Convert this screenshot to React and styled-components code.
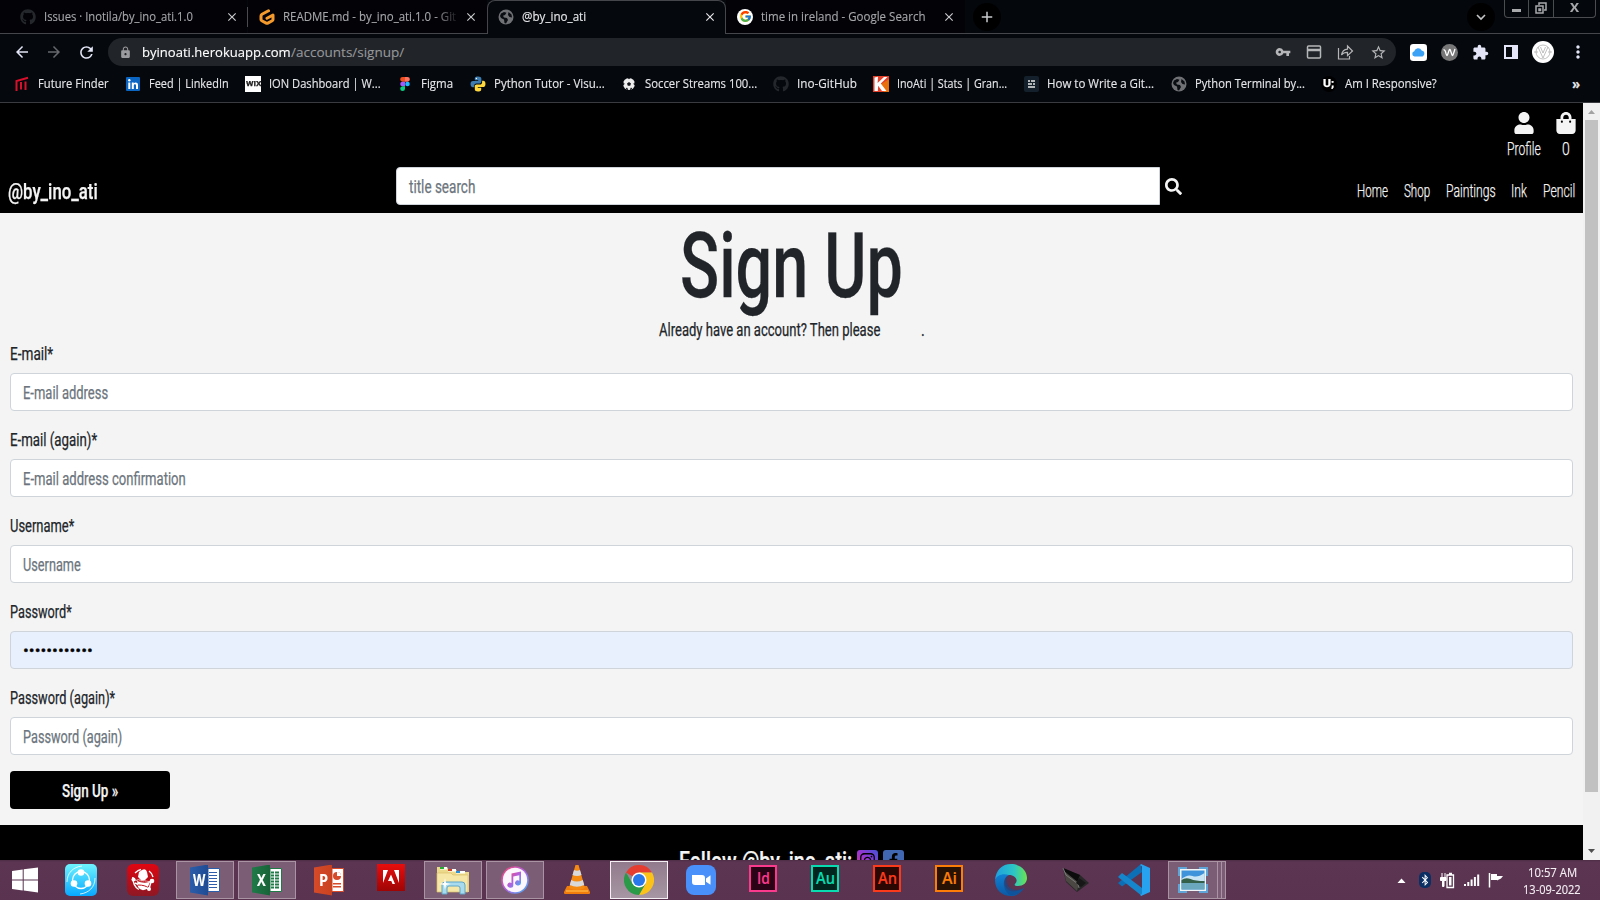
import React, { useLayoutEffect, useRef, useState } from 'react';
import styled, { createGlobalStyle, css } from 'styled-components';
import { FaGithub, FaUser, FaShoppingBag, FaSearch, FaInstagram, FaFacebookF, FaBluetoothB } from 'react-icons/fa';
import { MdLock, MdVpnKey, MdExtension, MdStarBorder, MdArrowBack, MdArrowForward, MdRefresh, MdPublic, MdMoreVert, MdClose, MdAdd } from 'react-icons/md';
import { FcGoogle } from 'react-icons/fc';

const Global = createGlobalStyle`
  * { box-sizing: border-box; }
  html, body { margin: 0; width: 1600px; height: 900px; overflow: hidden; background: #000; }
  svg { display: block; flex: none; }
`;

/* Text set to an exact measure: the glyphs are condensed or widened to fill it. */
const Measure = styled.span`
  display: block;
  flex: none;
  white-space: nowrap;
  width: ${p => p.$w}px;
  height: ${p => p.$lh}px;
  line-height: ${p => p.$lh}px;
  font-family: ${p => (p.$ui ? "'Open Sans', 'Noto Sans', sans-serif" : "Roboto, 'Liberation Sans', sans-serif")};
  font-size: ${p => p.$size}px;
  font-weight: ${p => p.$weight || 400};
  color: ${p => p.$color || 'inherit'};
  -webkit-text-stroke: ${p => (p.$ui ? 0.12 : 0.25)}px currentColor;
`;
const Stretch = styled.span`
  display: inline-block;
  transform-origin: 0 50%;
`;
function Fit({ w, size = 18, lh = 24, weight, color, ui, dy = ui ? 0 : 1, children }) {
  const ref = useRef(null);
  const [scale, setScale] = useState(1);
  useLayoutEffect(() => {
    setScale(w / ref.current.offsetWidth);
  }, [w, children]);
  return (
    <Measure $w={w} $size={size} $lh={lh} $weight={weight} $color={color} $ui={ui}>
      <Stretch ref={ref} style={{ transform: `translateY(${dy}px) scaleX(${scale})` }}>{children}</Stretch>
    </Measure>
  );
}

const Screen = styled.div`
  width: 1600px;
  height: 900px;
  display: flex;
  flex-direction: column;
  overflow: hidden;
  background: #000;
`;

/* ---------- browser chrome ---------- */
const TabStrip = styled.div`
  height: 34px;
  flex: none;
  display: flex;
  background: #04070c;
  box-shadow: inset 0 -1px #44464b;
`;
const Tab = styled.div`
  width: ${p => p.$w}px;
  height: ${p => (p.$active ? 34 : 33)}px;
  flex: none;
  display: flex;
  align-items: center;
  padding: 0 ${p => p.$right}px 0 ${p => p.$left}px;
  gap: 8px;
  color: #a6a7aa;
  background: #020207;
  ${p => p.$active && css`
    color: #e6e7ea;
    background: #05080d;
    border: 1px solid #44464b;
    border-bottom: 0;
    border-radius: 8px 8px 0 0;
    padding-bottom: 2px;
  `}
`;
const TabTitle = styled.div`
  flex: 1;
  min-width: 0;
  overflow: hidden;
  ${p => p.$fade && css`mask-image: linear-gradient(90deg, #000 88%, rgba(0, 0, 0, .15));`}
`;
const TabDivider = styled.div`
  width: 1px;
  height: 20px;
  margin-top: 7px;
  background: #4a4b4f;
`;
const RoundLogo = styled.div`
  width: 16px;
  height: 16px;
  border-radius: 50%;
  background: #fff;
  display: flex;
  align-items: center;
  justify-content: center;
`;
const RoundButton = styled.div`
  width: 28px;
  height: 28px;
  margin: 3px 0 0 ${p => p.$ml}px;
  border-radius: 50%;
  background: #000;
  color: #c9cacc;
  display: flex;
  align-items: center;
  justify-content: center;
`;
const WindowButtons = styled.div`
  display: grid;
  grid-template-columns: 24px 25px 1fr;
  width: 92px;
  height: 18px;
  margin-left: 9px;
  border: 1px solid #4b4c50;
  border-top: 0;
  border-radius: 0 0 4px 4px;
`;
const WindowButton = styled.div`
  display: flex;
  align-items: center;
  justify-content: center;
  padding-bottom: 1px;
  border-right: ${p => (p.$last ? 0 : 1)}px solid #4b4c50;
`;
const Toolbar = styled.div`
  height: 34px;
  flex: none;
  display: flex;
  align-items: center;
  padding: 2px 0 0 13px;
  background: #05080d;
  color: #e4e5f6;
`;
const NavIcons = styled.div`
  display: flex;
  gap: 14px;
  width: 95px;
  stroke-width: .5px;
`;
const AddressBar = styled.div`
  width: 1288px;
  height: 28px;
  border-radius: 14px;
  background: #212428;
  display: flex;
  align-items: center;
  padding: 0 9px 0 11px;
`;
const AddressText = styled.div`
  display: flex;
  margin-left: 10px;
`;
const AddressIcons = styled.div`
  display: flex;
  align-items: center;
  gap: 15px;
  margin-left: auto;
  color: #b5b6b8;
`;
const Extensions = styled.div`
  display: flex;
  align-items: center;
  justify-content: space-between;
  width: 178px;
  margin-left: 14px;
`;
const Bookmarks = styled.div`
  height: 35px;
  flex: none;
  display: flex;
  align-items: center;
  padding: 0 17px 2px 14px;
  gap: 16.2px;
  background: #05080d;
  border-bottom: 1px solid #393b40;
  color: #e6e7ea;
`;
const Bookmark = styled.div`
  display: flex;
  align-items: center;
  gap: 8px;
`;
const More = styled.div`
  margin-left: auto;
  padding-right: 3px;
`;
const Avatar = styled.div`
  width: 22px;
  height: 22px;
  border-radius: 50%;
  background: #fff;
`;

/* ---------- web page ---------- */
const Viewport = styled.div`
  height: 757px;
  flex: none;
  display: flex;
  overflow: hidden;
`;
const Page = styled.div`
  width: 1583px;
  height: 757px;
  overflow: hidden;
  background: #f4f4f4;
  color: #212529;
`;
const Header = styled.header`
  height: 110px;
  background: #000;
  color: #f4f4f4;
  padding: 9px 8px 0;
`;
const Account = styled.div`
  height: 55px;
  display: flex;
  justify-content: flex-end;
  gap: 15px;
  margin-right: -1px;
`;
const AccountLink = styled.div`
  display: flex;
  flex-direction: column;
  align-items: center;
  gap: 2px;
`;
const BagGlyph = styled.div`
  width: 20px;
  display: flex;
  justify-content: center;
`;
const NavRow = styled.div`
  display: flex;
  height: 46px;
`;
const Brand = styled.div`
  width: 388px;
  padding-top: 11px;
`;
const SearchBox = styled.div`
  width: 764px;
  height: 38px;
  padding: 6px 12px;
  background: #fff;
  border: 1px solid #ced4da;
  border-radius: 4px 0 0 4px;
`;
const SearchIcon = styled.div`padding: 11px 0 0 5px;`;
const Menu = styled.nav`
  display: flex;
  gap: 15.8px;
  padding-top: 11px;
  margin-left: auto;
`;
const Heading = styled.div`
  height: 104px;
  padding-top: 4px;
  display: flex;
  justify-content: center;
`;
const Lead = styled.div`
  height: 24px;
  display: flex;
  gap: 41px;
  padding-left: 659px;
`;
const Form = styled.div`padding: 0 10px;`;
const Field = styled.div`
  height: 38px;
  margin: 8px 0 16px;
  padding: 6px 12px;
  border: 1px solid #ced4da;
  border-radius: 4px;
  color: #6c757d;
  background: ${p => (p.$filled ? '#e8f0fe' : '#fff')};
`;
const Submit = styled.div`
  width: 160px;
  height: 38px;
  display: flex;
  align-items: center;
  justify-content: center;
  background: #000;
  color: #f4f4f4;
  border-radius: 4px;
`;
const Footer = styled.footer`
  height: 80px;
  margin-top: 16px;
  background: #000;
  color: #f4f4f4;
  display: flex;
  gap: 5px;
  padding: 25px 0 0 679px;
`;
const Social = styled.div`
  width: 21px;
  height: 21px;
  border-radius: 3px;
  display: flex;
  align-items: center;
  justify-content: center;
  color: #000;
  background: ${p => p.$bg};
`;
const Scrollbar = styled.div`
  width: 17px;
  background: #f1f1f1;
  display: flex;
  flex-direction: column;
  align-items: center;
`;
const Thumb = styled.div`
  width: 13px;
  height: 672px;
  margin-bottom: 51px;
  flex: none;
  background: #c1c1c1;
`;

/* ---------- taskbar ---------- */
const Taskbar = styled.div`
  height: 40px;
  flex: none;
  display: flex;
  background: linear-gradient(#4e2d46, #5b3552 2px, #593350);
`;
const Task = styled.div`
  width: ${p => p.$w || 58}px;
  height: 38px;
  flex: none;
  margin: 1px 4px 0 0;
  display: flex;
  align-items: center;
  justify-content: center;
  ${p => p.$open && css`
    background: #7c5d76;
    border: 1px solid #a994a4;
  `}
  ${p => p.$current && css`
    background: linear-gradient(#917a8c, #a796a3);
    border: 1px solid #f3eff2;
  `}
`;
const StartTask = styled(Task)`padding-left: 2px;`;
const Stack = styled.div`
  width: 4px;
  height: 38px;
  margin: 1px 0 0;
  background: #7c5d76;
  border-right: 1px solid #a994a4;
  border-top: 1px solid #a994a4;
  border-bottom: 1px solid #a994a4;
`;
const TaskGroup = styled.div`
  display: flex;
  margin-left: 7px;
  ${Task} { margin-right: 0; }
`;
const Adobe = styled.div`
  width: 28px;
  height: 27px;
  margin-bottom: 3px;
  border: 2px solid ${p => p.$c};
  background: ${p => p.$bg};
  color: ${p => p.$c};
  display: flex;
  align-items: center;
  justify-content: center;
`;
const Tray = styled.div`
  margin-left: auto;
  display: flex;
  align-items: center;
  padding-right: 19px;
`;
const TrayIcons = styled.div`
  display: flex;
  align-items: center;
  gap: 8.5px;
  margin-right: 19px;
`;
const Clock = styled.div`
  display: flex;
  flex-direction: column;
  align-items: center;
  padding-top: 2px;
  color: #f5f0f4;
`;

/* ---------- icons ---------- */
const Gitpod = () => (
  <svg width="16" height="16" viewBox="0 0 16 16" fill="none" stroke="#f49a2c" strokeWidth="3" strokeLinecap="round" strokeLinejoin="round">
    <path d="M9.5 1.8 3 5.3Q2 5.9 2 7v3.4q0 .9.8 1.3l4.4 2.4q.8.4 1.6 0l4.4-2.4q.8-.4.8-1.3V6L8 9.2" />
  </svg>
);
const Globe = () => (
  <svg width="16" height="16" viewBox="0 0 16 16"><circle cx="8" cy="8" r="7.500" fill="#6f7175" /><path d="M3 4.500 6 3l2.500.8L7 6l-2 .8 1 1.700 3 .5 1 2-2 3.500-1.500-.5L6 10.500 3 9l-1-2zM10.500 3l3 2.500.5 3-2.500-.5-1.500-2z" fill="#0a0d12" /></svg>
);
const Chevron = () => (
  <svg width="12" height="12" viewBox="0 0 12 12" fill="none" stroke="#c4c5c7" strokeWidth="1.6"><path d="m2 4 4 4 4-4" /></svg>
);
const Card = () => (
  <svg width="16" height="14" viewBox="0 0 16 14" fill="none" stroke="#b5b6b8" strokeWidth="1.5"><rect x="1.5" y="1" width="13" height="12" rx="1" /><path d="M1 5h14" strokeWidth="2.500" /></svg>
);
const Share = () => (
  <svg width="18" height="16" viewBox="0 0 18 16" fill="none" stroke="#b5b6b8" strokeWidth="1.2"><path d="M1.500 4v11h11v-3M4.500 11c.7-4 3-5.600 6-5.800V2l5 5-5 4.600V8.400C8 8.300 6 9 4.500 11z" /></svg>
);
const ICloud = () => (
  <svg width="17" height="17" viewBox="0 0 16 16"><rect width="16" height="16" rx="3" fill="#fff" /><path d="M4.300 11.700a2.500 2.500 0 0 1-.3-4.900A3.800 3.800 0 0 1 11 6a3 3 0 0 1 .8 5.700z" fill="#3ca2f6" /></svg>
);
const WExt = () => (
  <svg width="17" height="17" viewBox="0 0 17 17"><circle cx="8.500" cy="8.500" r="8.500" fill="#777" /><path d="M2.500 6q1.500-1 2.500 3.500 1 4 2 0l1-3q.8-2 1.500 0l1 3q1 4 2 0L14 5" fill="none" stroke="#fff" strokeWidth="1.300" strokeLinejoin="round" /></svg>
);
const SidePanel = () => (
  <svg width="14" height="14" viewBox="0 0 14 14"><path d="M0 0h14v14H0zM2 2v10h6V2z" fill="#e4e5f6" fillRule="evenodd" /></svg>
);
const AvatarArt = () => (
  <svg width="22" height="22" viewBox="0 0 22 22" fill="none" stroke="#a5a5a5" strokeWidth=".7"><circle cx="11" cy="11" r="7" /><path d="M2 11h4m10 0h4M6 6l5 11 5-11M8.500 6 11 12l2.500-6" /></svg>
);
const FutureFinder = () => (
  <svg width="16" height="16" viewBox="0 0 16 16" fill="none" stroke="#d8102c" strokeWidth="2"><path d="M2.500 15V5L14 1.800M7 13.500V6M11.500 14V5.500" /></svg>
);
const LinkedIn = () => (
  <svg width="16" height="16" viewBox="0 0 16 16"><rect x="1" y="1" width="14" height="14" rx="1" fill="#0a66c2" /><g fill="#fff"><circle cx="4.300" cy="4.300" r="1.200" /><path d="M3.300 6.500h2V13h-2zM6.800 6.500h1.900v.9c1-1.500 4.300-1.500 4.300 1.500V13h-2V9.500c0-1.800-2.200-1.700-2.200 0V13h-2z" /></g></svg>
);
const WixBox = styled.div`
  width: 16px;
  height: 16px;
  background: #fff;
  color: #222;
  display: flex;
  align-items: center;
  justify-content: center;
`;
const Figma = () => (
  <svg width="16" height="16" viewBox="0 0 16 16"><path d="M5.500 1H8v4.700H5.500a2.350 2.350 0 0 1 0-4.700z" fill="#f24e1e" /><path d="M8 1h2.500a2.350 2.350 0 0 1 0 4.700H8z" fill="#ff7262" /><path d="M5.500 5.700H8v4.600H5.500a2.300 2.300 0 0 1 0-4.600z" fill="#a259ff" /><circle cx="10.500" cy="8" r="2.300" fill="#1abcfe" /><path d="M5.500 10.300H8v2.400a2.400 2.400 0 1 1-2.500-2.400z" fill="#0acf83" /></svg>
);
const PythonLogo = () => (
  <svg width="16" height="16" viewBox="0 0 16 16"><path d="M8 .5C4.800.5 4.800 1.800 4.800 3v1.300h3.400v.6H3C1.400 4.900.5 6 .5 8s.9 3.200 2.300 3.200h1.500V9.500c0-1.200.9-2.100 2.100-2.100h3.200c1 0 1.800-.8 1.800-1.800V2.700C11.400 1.200 10 .5 8 .5z" fill="#3d7cb0" /><path d="M8 15.500c3.200 0 3.200-1.300 3.200-2.500v-1.300H7.800v-.6H13c1.600 0 2.500-1.100 2.500-3.100S14.600 4.800 13.200 4.800h-1.100v1.700c0 1.200-1 2.100-2.100 2.100H6.600c-1 0-1.800.8-1.800 1.800v2.900c0 1.500 1.200 2.200 3.200 2.200z" fill="#ffd83c" /><circle cx="6.400" cy="2.500" r=".7" fill="#fff" /></svg>
);
const Soccer = () => (
  <svg width="16" height="16" viewBox="0 0 16 16"><circle cx="8" cy="8" r="6" fill="#eee" /><g fill="#15171b"><path d="m8 6 2 1.500-.8 2.300H6.800L6 7.500zM6.500 2h3L8 3.300zM2.200 6l1.300 1.500L3 9l-1 .5zM13.800 6l-1.300 1.500.5 1.500 1 .5zM4.500 12l1.700-.3.8 1.500-.5 1zM11.500 12l-1.700-.3-.8 1.500.5 1z" /></g></svg>
);
const Kaggle = () => (
  <svg width="16" height="16" viewBox="0 0 16 16"><rect width="16" height="16" fill="#e2412b" /><path d="M7 9 16 3v13h-5z" fill="#e9700f" /><path d="M1.500 1.500 5 .8 4.600 7 11 1h3.500L7.800 7.500 13.500 15H9L5.200 9.800 4.800 15H1.500z" fill="#fff" /></svg>
);
const Doc = () => (
  <svg width="16" height="16" viewBox="0 0 16 16"><rect x="1" width="15" height="16" rx="2" fill="#14212c" /><path d="M5 5h2m1 0h4M5 8h4m1 0h2M5 11h7" stroke="#e8e8e8" strokeWidth="1.300" /></svg>
);
const UBox = styled.div`
  width: 16px;
  height: 16px;
  border-radius: 50%;
  background: #000;
  color: #fff;
  display: flex;
  align-items: center;
  justify-content: center;
`;
const Arrow = ({ up }) => (
  <svg width="17" height="17" viewBox="0 0 17 17"><path d={up ? 'M5 11h7L8.500 7z' : 'M5 6h7l-3.500 4z'} fill={up ? '#a3a3a3' : '#505050'} /></svg>
);
const Windows = () => (
  <svg width="26" height="26" viewBox="0 0 26 26" fill="#fff"><path d="M0 4 10.700 2.400v10H0zM11.700 2.200 26 .4v12H11.700zM0 13.500h10.700v10L0 22zM11.700 13.500H26v12l-14.300-1.900z" /></svg>
);
const ShareIt = () => (
  <svg width="32" height="32" viewBox="0 0 32 32">
    <defs><linearGradient id="si" x2="0" y2="1"><stop stopColor="#6ff3ff" /><stop offset="1" stopColor="#08a8ff" /></linearGradient></defs>
    <rect width="32" height="32" rx="5" fill="url(#si)" />
    <g fill="none" stroke="#fff" strokeWidth="1.300"><circle cx="16" cy="16" r="8.500" /><path d="M2 18C2 9 8 3 17 2M30 14c0 9-6 15-15 16" strokeWidth=".8" /></g>
    <g fill="#fff"><circle cx="16" cy="8.500" r="3.300" /><circle cx="9" cy="19.500" r="3.300" /><circle cx="23" cy="19.500" r="3.300" /></g>
  </svg>
);
const RedGlobe = () => (
  <svg width="32" height="32" viewBox="0 0 32 32">
    <defs><linearGradient id="rg" x2="0" y2="1"><stop stopColor="#e10510" /><stop offset="1" stopColor="#8d1824" /></linearGradient></defs>
    <rect width="32" height="32" rx="6" fill="url(#rg)" />
    <path d="M15 6q4-2 5 2l1 5-3 3h-4l-3-3 1-5zM10 17q6 3 13 1l-3 7q-6 3-9-2z" fill="#fff" />
    <g fill="none" stroke="#fff" strokeWidth="1.400"><path d="M8 9q3-3 6-3.500M5.800 13q0 9 6 12.500M22 7q3 2 4 6M6.500 15.500 24 18l-2 7M8 19l14 6" /><path d="M8 15c6 3 11 3 16 1M11 21c5 0 8 1 11 3" stroke="#c5121c" strokeWidth="1" /></g>
    <g fill="#fff"><circle cx="6.500" cy="15.500" r="2" /><circle cx="25" cy="17" r="2.300" /><circle cx="22" cy="25" r="2" /></g>
  </svg>
);
const OfficeTile = styled.div`
  display: grid;
  grid-template-columns: 18px 12px;
  align-items: center;
  width: 30px;
  height: 31px;
`;
const OfficeCover = styled.div`
  height: 31px;
  display: flex;
  align-items: center;
  justify-content: center;
  color: #fff;
  background: linear-gradient(90deg, ${p => p.$c}, ${p => p.$d});
  clip-path: polygon(0 10%, 100% 0, 100% 100%, 0 90%);
`;
const OfficeSheet = ({ c, kind }) => (
  <svg width="12" height="24" viewBox="0 0 12 24">
    <path d="M0 .5h11.500v23H0z" fill="#fff" stroke={c} />
    {kind === 'P' ? (
      <g fill={c}><circle cx="5" cy="8" r="4" /><path d="M1 15h8v1.500H1zM1 18h8v1.500H1z" /><path d="M5 8V4a4 4 0 0 1 4 4z" fill="#fff" /></g>
    ) : (
      <path d={kind === 'W' ? 'M1 4.500h8M1 7.500h8M1 10.500h8M1 13.500h8M1 16.500h8M1 19.500h8' : 'M1 4.500h3m1 0h4M1 7.500h3m1 0h4M1 10.500h3m1 0h4M1 13.500h3m1 0h4M1 16.500h3m1 0h4M1 19.500h3m1 0h4'} stroke={c} strokeWidth={kind === 'W' ? 1.2 : 1.8} />
    )}
  </svg>
);
const Office = ({ letter, c, d }) => (
  <OfficeTile>
    <OfficeCover $c={c} $d={d}><Fit ui w={letter === 'W' ? 12 : 9} size={16} lh={20} weight={700}>{letter}</Fit></OfficeCover>
    <OfficeSheet c={c} kind={letter} />
  </OfficeTile>
);
const AdobeReader = () => (
  <svg width="28" height="32" viewBox="0 0 28 32">
    <defs><linearGradient id="ar" x2="0" y2="1"><stop stopColor="#e80d0d" /><stop offset="1" stopColor="#9e0505" /></linearGradient></defs>
    <rect width="28" height="27" fill="url(#ar)" />
    <path d="M6 6h5L6 19zM17 6h5v13zM14 10.500 18 20h-2.500l-1.200-3H11z" fill="#fff" />
  </svg>
);
const Folder = () => (
  <svg width="34" height="32" viewBox="0 0 34 32">
    <path d="M1 7V3h10l2 3h7l2 2h11v20H1z" fill="#ecd98a" /><path d="M1 9h14l2 2h15v17H1z" fill="#f7e7a6" stroke="#d9c06a" strokeWidth=".7" />
    <rect x="4" y="3" width="7" height="2.500" fill="#fff" /><rect x="4" y="3" width="4" height="2" fill="#27ad33" /><rect x="12" y="5" width="8" height="2.500" fill="#fff" /><rect x="12" y="5" width="4" height="2" fill="#cb4025" /><rect x="20" y="7" width="9" height="2.500" fill="#fff" /><rect x="20" y="7" width="4" height="2" fill="#2b8fd8" />
    <path d="M6 30V21q0-3 3-3h17q3 0 3 3v9h-5v-6q0-2-2-2h-9q-2 0-2 2v6z" fill="#a9dbee" stroke="#5fa6c8" /><path d="m9 14 1 5 5 1-5 1-1 5-1-5-5-1 5-1z" fill="#fff" />
  </svg>
);
const ITunes = () => (
  <svg width="28" height="28" viewBox="0 0 28 28">
    <defs><linearGradient id="it" x2="1" y2="1"><stop stopColor="#f2466b" /><stop offset=".5" stopColor="#b25fe0" /><stop offset="1" stopColor="#38b8f5" /></linearGradient></defs>
    <circle cx="14" cy="14" r="13.800" fill="url(#it)" /><circle cx="14" cy="14" r="12.200" fill="#fcf7fc" />
    <path d="M10.500 7.500 20 5.500V17a3 2.500 0 1 1-1.700-2.300V9.300l-6 1.300v8.600a3 2.500 0 1 1-1.800-2.300z" fill="url(#it)" />
  </svg>
);
const Vlc = () => (
  <svg width="28" height="32" viewBox="0 0 28 32">
    <path d="M4 22h20l3 6q.5 2-1 2H2q-1.500 0-1-2z" fill="#f07d0c" /><path d="M3 27h22" stroke="#ffb13c" strokeWidth="1.500" />
    <path d="M12.500 1h3L22 24q-8 4-16 0z" fill="#f58a13" /><path d="m11 6-1.500 5q4.500 2 9 0L17 6q-3 1.500-6 0zM8.200 16 6.800 21q7 3.500 14.400 0l-1.400-5q-6 3-11.600 0z" fill="#d9d9d9" />
  </svg>
);
const Chrome = () => (
  <svg width="30" height="30" viewBox="0 0 30 30">
    <path d="M15 15 2 7.500A15 15 0 0 1 28 7.500H15z" fill="#e53d30" />
    <path d="M15 7.500h13A15 15 0 0 1 15 30l6.500-11.200z" fill="#fbc21a" />
    <path d="M2 7.500A15 15 0 0 0 15 30l6.500-11.200L15 15 8.500 18.700z" fill="#2a9a48" />
    <circle cx="15" cy="15" r="7.500" fill="#fff" /><circle cx="15" cy="15" r="6" fill="#2878ec" />
  </svg>
);
const Zoom = () => (
  <svg width="30" height="30" viewBox="0 0 30 30"><rect width="30" height="30" rx="8" fill="#4a90fb" /><path d="M6 10h10q3 0 3 3v7H9q-3 0-3-3zM20 13.500l4.500-3.200v9.400L20 16.700z" fill="#fff" /></svg>
);
const Edge = () => (
  <svg width="32" height="32" viewBox="0 0 32 32">
    <defs><linearGradient id="eg"><stop stopColor="#1f9fe0" /><stop offset=".6" stopColor="#2cc5c5" /><stop offset="1" stopColor="#6ae34f" /></linearGradient><linearGradient id="eb" x2="0" y2="1"><stop stopColor="#1180d2" /><stop offset="1" stopColor="#0c59a4" /></linearGradient></defs>
    <path d="M0 16C1 6 7 0 16 0c10 0 16 7 16 14 0 5-4 8-9 8-3 0-4-1-3-2 4-4 0-9-6-9C7 11 1 13 0 16z" fill="url(#eg)" />
    <path d="M0 16c2-5 8-7 14-5-5 2-6 8-3 13 3 4 10 5 18 0-4 6-8 8-13 8C7 32 0 26 0 16z" fill="url(#eb)" />
    <path d="M14 11c-4 3-3 10 1 13s10 2 14 0c-4 6-9 8-14 7C8 27 6 15 14 11z" fill="#0f4f94" opacity=".65" />
  </svg>
);
const Laptop = () => (
  <svg width="28" height="28" viewBox="0 0 28 28"><path d="m1 2 17 7 9 8-12 9L4 16z" fill="#292828" /><path d="m1 2 17 7-3 7L4 8z" fill="#0c0c0c" /><path d="m2 5 2 10 11 10 2-8z" fill="#4b4844" /><path d="m1 2 3 7 12 9 1 4" fill="none" stroke="#888" strokeWidth=".8" /><path d="m17 12 7 5-5 4-5-4z" fill="#171717" /></svg>
);
const VsCode = () => (
  <svg width="32" height="32" viewBox="0 0 32 32"><path d="m24 8-20 14.500-4-3.500L23 0z" fill="#0d6fb5" /><path d="M4 9 24 24v8L0 13z" fill="#1686cc" /><path d="m23 0 9 4v24l-9 4-1-1.500q2 .5 2-1.500V3q0-2-2-1.500z" fill="#27a2ee" /></svg>
);
const Viewer = () => (
  <svg width="30" height="26" viewBox="0 0 30 26">
    <path d="M0 0h9v4H4v5H0zM21 0h9v9h-4V4h-5zM0 17h4v5h5v4H0zM26 17h4v9h-9v-4h5z" fill="#5fa5d8" /><rect x="2" y="2" width="26" height="22" fill="#f2f5f7" /><rect x="3.500" y="3.500" width="23" height="19" fill="#3f93da" />
    <path d="M3.500 12q6-5 11-3t12-3v8h-23z" fill="#c9e5f5" /><path d="M3.500 13q4-3 9-1t14 2v2h-23z" fill="#34604a" /><path d="M3.500 16h23v6.500h-23z" fill="#6ca8bd" />
  </svg>
);
const Battery = () => (
  <svg width="16" height="17" viewBox="0 0 16 17"><path d="M3 1v4M6 1v4M1.500 5.500h5.500v3H5v6H3.500v-6h-2z" stroke="#fff" fill="#fff" strokeWidth="1" /><path d="M8 3h6.500v12.500H8zM10 1.500h3" stroke="#fff" strokeWidth="1.300" fill="none" /><path d="M10 5h2.500v8.500H10z" fill="#fff" /></svg>
);
const Signal = () => (
  <svg width="16" height="14" viewBox="0 0 16 14" fill="#fff"><path d="M0 11h2v2H0zM3.300 9h2v4h-2zM6.600 6.500h2V13h-2zM9.900 4h2v9h-2zM13.200 1.500h2V13h-2z" /></svg>
);
const Flag = () => (
  <svg width="16" height="16" viewBox="0 0 16 16"><path d="M1.500 1v14.500" stroke="#fff" strokeWidth="1.500" /><path d="M3 2h6v2h6l-2 2.500-4 2V8H3z" fill="#fff" /></svg>
);
const BtBadge = styled.div`
  width: 12px;
  height: 16px;
  border-radius: 5px;
  background: #0b2f63;
  color: #fff;
  display: flex;
  align-items: center;
  justify-content: center;
`;

/* ---------- data ---------- */
const bookmarks = [
  [<FutureFinder />, 'Future Finder', 71],
  [<LinkedIn />, 'Feed | LinkedIn', 80],
  [<WixBox><Fit w={15} size={8} lh={12} dy={0} weight={700}>WIX</Fit></WixBox>, 'ION Dashboard | W...', 111.5],
  [<Figma />, 'Figma', 32.5],
  [<PythonLogo />, 'Python Tutor - Visu...', 111],
  [<Soccer />, 'Soccer Streams 100...', 112],
  [<FaGithub size={16} color="#24272b" />, 'Ino-GitHub', 59.5],
  [<Kaggle />, 'InoAti | Stats | Gran...', 110],
  [<Doc />, 'How to Write a Git...', 107.5],
  [<Globe />, 'Python Terminal by...', 110],
  [<UBox><Fit w={11} size={11} lh={14} dy={0} weight={700}>U;</Fit></UBox>, 'Am I Responsive?', 92],
];
const fields = [
  ['E-mail*', 43, 'E-mail address', 85],
  ['E-mail (again)*', 87, 'E-mail address confirmation', 162.5],
  ['Username*', 64, 'Username', 58],
  ['Password*', 61.5, '••••••••••••', 70, true],
  ['Password (again)*', 105, 'Password (again)', 99],
];
const menu = [['Home', 31], ['Shop', 26.5], ['Paintings', 49.5], ['Ink', 16], ['Pencil', 32]];

export default function App() {
  return (
    <Screen>
      <Global />
      <TabStrip>
        <Tab $w={247} $left={20} $right={8}>
          <FaGithub size={16} color="#24272b" />
          <TabTitle><Fit ui w={149} size={12} lh={20}>Issues · Inotila/by_ino_ati.1.0</Fit></TabTitle>
          <MdClose size={14} color="#c9cacc" />
        </Tab>
        <TabDivider />
        <Tab $w={239} $left={11} $right={9}>
          <Gitpod />
          <TabTitle $fade><Fit ui w={173} size={12} lh={20}>README.md - by_ino_ati.1.0 - Git</Fit></TabTitle>
          <MdClose size={14} color="#c9cacc" />
        </Tab>
        <Tab $active $w={239} $left={10} $right={8}>
          <Globe />
          <TabTitle><Fit ui w={64} size={12} lh={20}>@by_ino_ati</Fit></TabTitle>
          <MdClose size={14} />
        </Tab>
        <Tab $w={239} $left={11} $right={9}>
          <RoundLogo><FcGoogle size={13} /></RoundLogo>
          <TabTitle><Fit ui w={165} size={12} lh={20}>time in ireland - Google Search</Fit></TabTitle>
          <MdClose size={14} color="#c9cacc" />
        </Tab>
        <RoundButton $ml={8}><MdAdd size={18} /></RoundButton>
        <RoundButton $ml={466}><Chevron /></RoundButton>
        <WindowButtons>
          <WindowButton><svg width="9" height="12"><path d="M0 7h9v3H0z" fill="#a8a9ab" /></svg></WindowButton>
          <WindowButton><svg width="12" height="12" fill="none" stroke="#a8a9ab" strokeWidth="1.5"><path d="M4 3V1h7v7H9M1 4h7v7H1zM4 7h1.500v1.500H4z" /></svg></WindowButton>
          <WindowButton $last><Fit ui w={9} size={12} lh={16} weight={700} color="#a8a9ab">X</Fit></WindowButton>
        </WindowButtons>
      </TabStrip>
      <Toolbar>
        <NavIcons>
          <MdArrowBack size={18} stroke="currentColor" /><MdArrowForward size={18} color="#66686e" stroke="currentColor" /><MdRefresh size={19} stroke="currentColor" />
        </NavIcons>
        <AddressBar>
          <MdLock size={13} color="#9a9b9e" />
          <AddressText>
            <Fit ui w={149} size={13.5} lh={24} color="#fff">byinoati.herokuapp.com</Fit>
            <Fit ui w={113} size={13.5} lh={24} color="#96989b">/accounts/signup/</Fit>
          </AddressText>
          <AddressIcons><MdVpnKey size={16} /><Card /><Share /><MdStarBorder size={17} /></AddressIcons>
        </AddressBar>
        <Extensions>
          <ICloud /><WExt /><MdExtension size={17} /><SidePanel /><Avatar><AvatarArt /></Avatar><MdMoreVert size={20} />
        </Extensions>
      </Toolbar>
      <Bookmarks>
        {bookmarks.map(([icon, label, w]) => (
          <Bookmark key={label}>{icon}<Fit ui w={w} size={12} lh={20}>{label}</Fit></Bookmark>
        ))}
        <More><Fit ui w={8} size={15} lh={22} weight={700} dy={-1}>»</Fit></More>
      </Bookmarks>

      <Viewport>
        <Page>
          <Header>
            <Account>
              <AccountLink><FaUser size={22} /><Fit w={34} weight={300} size={17.5}>Profile</Fit></AccountLink>
              <AccountLink><BagGlyph><FaShoppingBag size={22} /></BagGlyph><Fit w={8} weight={300} size={17.5}>0</Fit></AccountLink>
            </Account>
            <NavRow>
              <Brand><Fit w={90} size={22} lh={28} dy={0} weight={500}>@by_ino_ati</Fit></Brand>
              <SearchBox><Fit w={66} color="#6c757d">title search</Fit></SearchBox>
              <SearchIcon><FaSearch size={17} /></SearchIcon>
              <Menu>{menu.map(([t, w]) => <Fit key={t} w={w} weight={300} size={17.5}>{t}</Fit>)}</Menu>
            </NavRow>
          </Header>
          <Heading><Fit w={223} size={91} lh={96} weight={500}>Sign Up</Fit></Heading>
          <Lead><Fit w={221}>Already have an account? Then please</Fit><Fit w={4}>.</Fit></Lead>
          <Form>
            {fields.map(([label, lw, value, vw, filled]) => (
              <React.Fragment key={label}>
                <Fit w={lw}>{label}</Fit>
                <Field $filled={filled}><Fit w={vw} size={filled ? 16 : 18} color={filled ? '#000' : undefined}>{value}</Fit></Field>
              </React.Fragment>
            ))}
            <Submit><Fit w={56} weight={500}>Sign Up »</Fit></Submit>
          </Form>
          <Footer>
            <Fit w={173} size={26} lh={20} weight={500}>Follow @by_ino_ati:</Fit>
            <Social $bg="linear-gradient(45deg, #e0338a, #9a35cf 50%, #4353d8)"><FaInstagram size={17} /></Social>
            <Social $bg="#4267b2"><FaFacebookF size={15} /></Social>
          </Footer>
        </Page>
        <Scrollbar><Arrow up /><Thumb /><Arrow /></Scrollbar>
      </Viewport>

      <Taskbar>
        <StartTask $w={48}><Windows /></StartTask>
        <Task><ShareIt /></Task>
        <Task><RedGlobe /></Task>
        <Task $open><Office letter="W" c="#2b5daa" d="#1f4b93" /></Task>
        <Task $open><Office letter="X" c="#1f7a48" d="#186339" /></Task>
        <Task><Office letter="P" c="#d64b2a" d="#c9421f" /></Task>
        <Task><AdobeReader /></Task>
        <Task $open><Folder /></Task>
        <Task $open><ITunes /></Task>
        <Task><Vlc /></Task>
        <Task $current><Chrome /></Task>
        <Task><Zoom /></Task>
        <Task><Adobe $c="#fb3a8e" $bg="#2b0316"><Fit ui w={13} size={17} lh={22} dy={-1} weight={600}>Id</Fit></Adobe></Task>
        <Task><Adobe $c="#07dcb0" $bg="#03251f"><Fit ui w={19} size={17} lh={22} dy={-1} weight={600}>Au</Fit></Adobe></Task>
        <Task><Adobe $c="#fb3a1c" $bg="#2a0703"><Fit ui w={19} size={17} lh={22} dy={-1} weight={600}>An</Fit></Adobe></Task>
        <Task><Adobe $c="#fc7d08" $bg="#271203"><Fit ui w={15} size={17} lh={22} dy={-1} weight={600}>Ai</Fit></Adobe></Task>
        <Task><Edge /></Task>
        <Task $w={63}><Laptop /></Task>
        <Task $w={46}><VsCode /></Task>
        <TaskGroup><Task $open $w={50}><Viewer /></Task><Stack /><Stack /></TaskGroup>
        <Tray>
          <TrayIcons>
            <svg width="17" height="8" viewBox="0 0 17 8"><path d="m4.500 7 4-4.500 4 4.500z" fill="#fff" /></svg>
            <BtBadge><FaBluetoothB size={12} /></BtBadge><Battery /><Signal /><Flag />
          </TrayIcons>
          <Clock><Fit ui w={49} size={12} lh={17}>10:57 AM</Fit><Fit ui w={58} size={12} lh={17}>13-09-2022</Fit></Clock>
        </Tray>
      </Taskbar>
    </Screen>
  );
}
